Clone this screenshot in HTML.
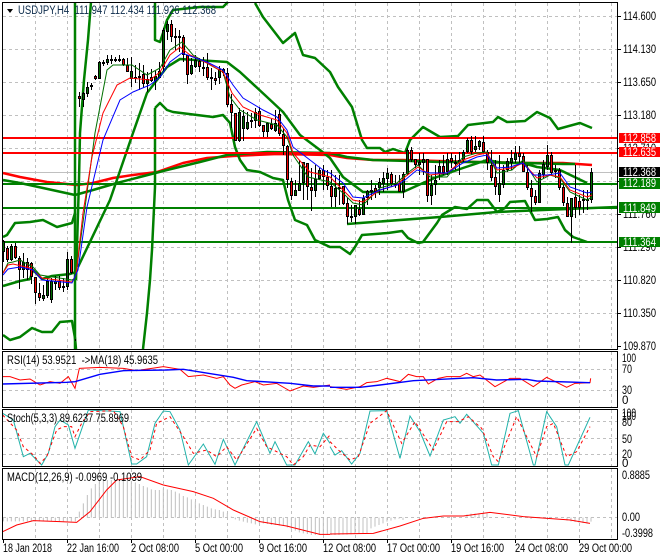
<!DOCTYPE html>
<html><head><meta charset="utf-8"><style>
html,body{margin:0;padding:0;background:#fff}
svg{display:block}
text{font-family:"Liberation Sans",sans-serif;font-size:11.5px;fill:#000}
.g{stroke:#c0c0c0;stroke-width:1;stroke-dasharray:3 3;fill:none}
.b{stroke:#008000;stroke-width:2.5;fill:none;stroke-linejoin:round}
.t{stroke-width:1;fill:none}
.n{vector-effect:non-scaling-stroke;fill:none;stroke-width:1}
</style></head><body>
<svg width="660" height="560" viewBox="0 0 660 560" xmlns="http://www.w3.org/2000/svg">
<rect width="660" height="560" fill="#fff"/>
<path class="g" d="M35.5 3V349M67.5 3V349M99.5 3V349M131.5 3V349M163.5 3V349M195.5 3V349M227.5 3V349M259.5 3V349M291.5 3V349M323.5 3V349M355.5 3V349M387.5 3V349M419.5 3V349M451.5 3V349M483.5 3V349M515.5 3V349M547.5 3V349M579.5 3V349M611.5 3V349
M35.5 352V407M67.5 352V407M99.5 352V407M131.5 352V407M163.5 352V407M195.5 352V407M227.5 352V407M259.5 352V407M291.5 352V407M323.5 352V407M355.5 352V407M387.5 352V407M419.5 352V407M451.5 352V407M483.5 352V407M515.5 352V407M547.5 352V407M579.5 352V407M611.5 352V407
M35.5 410V466M67.5 410V466M99.5 410V466M131.5 410V466M163.5 410V466M195.5 410V466M227.5 410V466M259.5 410V466M291.5 410V466M323.5 410V466M355.5 410V466M387.5 410V466M419.5 410V466M451.5 410V466M483.5 410V466M515.5 410V466M547.5 410V466M579.5 410V466M611.5 410V466
M35.5 469V539M67.5 469V539M99.5 469V539M131.5 469V539M163.5 469V539M195.5 469V539M227.5 469V539M259.5 469V539M291.5 469V539M323.5 469V539M355.5 469V539M387.5 469V539M419.5 469V539M451.5 469V539M483.5 469V539M515.5 469V539M547.5 469V539M579.5 469V539M611.5 469V539
M3 16.5H617M3 49.5H617M3 82.5H617M3 115.5H617M3 148.5H617M3 181.5H617M3 214.5H617M3 247.5H617M3 280.5H617M3 313.5H617
M3 369.5H617M3 390.5H617M3 421.5H617M3 438.5H617M3 454.5H617M3 517.5H617"/>
<path d="M3 172.5H617" stroke="#c0c0c0" fill="none"/>

<!-- MACD histogram -->
<g transform="translate(0,280) scale(.33333)">
<path class="n" stroke="#c0c0c0" d="M10 713V724M22 713V724M34 713V724M46 713V724M58 713V724M70 713V724M82 713V724M94 713V724M106 713V724M118 713V724M130 713V724M142 713V724M154 713V724M166 713V724M178 713V724M190 713V724M202 713V724M214 713V724M226 713V724M238 713V695M250 713V670M262 713V645M274 713V625M286 713V612M298 713V605M310 713V600M322 713V600M334 713V600M346 713V600M358 713V600M370 713V598M382 713V600M394 713V603M406 713V607M418 713V612M430 713V618M442 713V622M454 713V628M466 713V630M478 713V630M490 713V625M502 713V628M514 713V630M526 713V635M538 713V640M550 713V648M562 713V652M574 713V658M586 713V665M598 713V670M610 713V675M622 713V680M634 713V685M646 713V688M658 713V690M670 713V695M682 713V700M694 713V710M706 713V718M718 713V722M730 713V725M742 713V728M754 713V730M766 713V733M778 713V730M790 713V730M802 713V732M814 713V735M826 713V735M838 713V737M850 713V738M862 713V742M874 713V748M886 713V752M898 713V757M910 713V760M922 713V762M934 713V765M946 713V765M958 713V765M970 713V765M982 713V765"/>
</g>
<g transform="translate(330,280) scale(.33333)">
<path class="n" stroke="#c0c0c0" d="M3 713V765M15 713V765M27 713V765M39 713V764M51 713V764M63 713V763M75 713V762M87 713V762M99 713V760M111 713V760M123 713V745M135 713V740M147 713V735M159 713V730M171 713V725M183 713V722M195 713V718M207 713V716M219 713V720M279 713V717M291 713V716M411 713V703M423 713V701M435 713V700M447 713V700M459 713V700M471 713V700M603 713V717M711 713V722M723 713V724M735 713V726M747 713V728M759 713V729M771 713V731M783 713V725"/>
</g>

<!-- long MAs -->
<polyline class="b" style="stroke:#ff0000;stroke-width:2.5" points="3,173 20,177 47,182 77,185 93,183 113,178 133,175 157,172 183,163 207,158 233,156 277,154 330,155 347,158 373,160 403,160 475,162 527,163 563,163 592,165"/>
<polyline class="b" points="3,180 20,183 43,188 75,195 93,190 117,183 140,177 167,170 200,162 227,155 267,152 330,153 347,157 373,160 410,161 440,162 475,162 527,163 563,164 575,164"/>
<!-- trend line -->
<polyline class="b" points="347,224 440,217 497,212 543,210 617,207"/>
<!-- bands -->
<polyline class="b" points="3,237 7,235 15,223 30,222 43,220 57,227 72,223 75,213"/>
<polyline class="b" points="3,335 10,340 20,337 32,328 42,332 52,332 60,322 72,321 75,338 76,349"/>
<polyline class="b" points="3,286 20,281 30,279 33,270 42,279 52,276 70,274 76,272"/>
<polyline class="b" points="75,2 75,349"/>
<polyline class="b" points="76,280 79,180 80,133 84,80 88,40 91,2"/>
<polyline class="b" points="155,2 155,40 160,42 163,33 167,20 173,10 200,7 223,7 228,2"/>
<polyline class="b" points="155,108 155,187 152,250 150,280 147,313 143,349"/>
<polyline class="b" points="155,108 160,103 167,110 173,112 213,117 223,115 230,123 235,147 240,160 247,170 260,172 273,178 283,180 288,200 295,220 307,225 315,240 330,247 340,247 350,254 355,247 362,235 388,233 402,231 408,238 418,243 423,242 437,223 442,215 455,207 467,209 477,200 488,200 497,212 505,208 510,202 525,201 535,220 547,219 558,217 565,230 573,237 587,242"/>
<polyline class="b" points="255,3 263,17 283,43 295,33 303,55 315,58 330,72 338,87 352,107 362,140 367,148 380,148 385,152 393,149 405,153 410,140 423,127 440,137 458,136 468,125 493,122 498,117 507,122 525,121 537,112 550,118 558,129 580,123 592,128"/>
<polyline class="b" points="78,267 110,200 133,133 147,93 157,80 167,67 180,59 227,62 240,72 267,97 283,112 300,135 320,150 330,158 343,177 363,192 380,192 403,192 423,183 437,177 463,168 487,160 503,163 523,163 537,167 560,170 587,183"/>

<!-- horizontals -->
<path d="M3 138H617M3 153H617" stroke="#ff0000" stroke-width="2" fill="none"/>
<path d="M3 184H617M3 208H617M3 242H617" stroke="#008000" stroke-width="2" fill="none"/>

<!-- candles -->
<path stroke="#000" fill="none" d="M3.5 240V262M7.5 246V262M11.5 244V261M15.5 243V259M19.5 256V289M23.5 253V278M27.5 258V280M31.5 262V284M35.5 277V304M39.5 283V301M43.5 285V301M47.5 278V298M51.5 278V303M55.5 276V290M59.5 276V290M63.5 278V292M67.5 252V290M71.5 256V274M75.5 339V341M79.5 92V107M83.5 92V107M87.5 82V97M91.5 83V90M95.5 75V80M99.5 61V79M103.5 60V66M107.5 55V65M111.5 55V64M115.5 57V62M119.5 55V62M123.5 58V66M127.5 58V72M131.5 57V87M135.5 65V83M139.5 63V90M143.5 65V88M147.5 72V92M151.5 69V82M155.5 71V90M159.5 62V78M163.5 28V72M167.5 21V40M171.5 20V42M175.5 28V50M179.5 30V52M183.5 35V62M187.5 55V84M191.5 58V75M195.5 55V68M199.5 58V72M203.5 57V76M207.5 53V80M211.5 68V90M215.5 72V85M219.5 66V84M223.5 68V76M227.5 68V107M231.5 94V128M235.5 113V141M239.5 108V142M243.5 110V141M247.5 112V130M251.5 113V128M255.5 108V128M259.5 107V127M263.5 125V137M267.5 122V137M271.5 119V130M275.5 110V132M279.5 110V136M283.5 128V155M287.5 145V188M291.5 178V200M295.5 180V196M299.5 160V191M303.5 162V200M307.5 163V200M311.5 168V211M315.5 165V197M319.5 168V180M323.5 165V190M327.5 170V190M331.5 170V207M335.5 175V207M339.5 175V205M343.5 186V205M347.5 198V224M351.5 205V222M355.5 205V224M359.5 200V216M363.5 195V215M367.5 190V205M371.5 180V200M375.5 185V198M379.5 178V195M383.5 172V192M387.5 168V190M391.5 172V186M395.5 175V188M399.5 175V192M403.5 172V198M407.5 148V175M411.5 147V162M415.5 159V168M419.5 153V175M423.5 153V175M427.5 159V202M431.5 175V205M435.5 165V195M439.5 160V180M443.5 155V175M447.5 153V175M451.5 153V168M455.5 155V170M459.5 152V175M463.5 150V162M467.5 138V153M471.5 136V155M475.5 136V152M479.5 140V150M483.5 136V153M487.5 150V170M491.5 150V181M495.5 160V195M499.5 155V202M503.5 165V188M507.5 158V172M511.5 150V170M515.5 146V163M519.5 146V165M523.5 153V172M527.5 165V190M531.5 180V212M535.5 190V205M539.5 170V203M543.5 160V178M547.5 145V170M551.5 152V175M555.5 165V178M559.5 168V190M563.5 185V206M567.5 197V217M571.5 198V243M575.5 165V218M579.5 195V215M583.5 190V213M587.5 190V210M591.5 168V203"/>
<path stroke="#000" fill="#f00000" d="M6.5 248.5h2V259.5h-2zM14.5 246.5h2V257.5h-2zM18.5 258.5h2V269.5h-2zM26.5 262.5h2V269.5h-2zM30.5 263.5h2V276.5h-2zM34.5 277.5h2V292.5h-2zM38.5 293.5h2V297.5h-2zM58.5 281.5h2V287.5h-2zM70.5 259.5h2V272.5h-2zM78.5 96.5h2V98.5h-2zM94.5 76.5h2V78.5h-2zM102.5 62.5h2V63.5h-2zM122.5 59.5h2V64.5h-2zM126.5 65.5h2V71.5h-2zM134.5 77.5h2V78.5h-2zM142.5 74.5h2V83.5h-2zM150.5 77.5h2V80.5h-2zM170.5 24.5h2V36.5h-2zM182.5 37.5h2V54.5h-2zM186.5 55.5h2V74.5h-2zM198.5 61.5h2V66.5h-2zM206.5 67.5h2V77.5h-2zM214.5 78.5h2V80.5h-2zM226.5 73.5h2V104.5h-2zM230.5 104.5h2V112.5h-2zM234.5 113.5h2V140.5h-2zM258.5 111.5h2V125.5h-2zM262.5 125.5h2V131.5h-2zM270.5 124.5h2V128.5h-2zM278.5 114.5h2V133.5h-2zM282.5 134.5h2V145.5h-2zM286.5 146.5h2V179.5h-2zM290.5 181.5h2V195.5h-2zM306.5 163.5h2V186.5h-2zM310.5 187.5h2V190.5h-2zM322.5 170.5h2V176.5h-2zM326.5 177.5h2V185.5h-2zM330.5 186.5h2V196.5h-2zM338.5 187.5h2V188.5h-2zM342.5 186.5h2V203.5h-2zM346.5 203.5h2V216.5h-2zM358.5 209.5h2V214.5h-2zM374.5 188.5h2V191.5h-2zM390.5 174.5h2V183.5h-2zM398.5 183.5h2V191.5h-2zM410.5 150.5h2V159.5h-2zM414.5 159.5h2V164.5h-2zM426.5 159.5h2V195.5h-2zM442.5 166.5h2V172.5h-2zM450.5 158.5h2V161.5h-2zM470.5 140.5h2V151.5h-2zM482.5 142.5h2V151.5h-2zM486.5 152.5h2V162.5h-2zM490.5 165.5h2V177.5h-2zM494.5 177.5h2V186.5h-2zM518.5 153.5h2V156.5h-2zM522.5 156.5h2V171.5h-2zM526.5 172.5h2V187.5h-2zM530.5 188.5h2V196.5h-2zM534.5 196.5h2V202.5h-2zM550.5 155.5h2V172.5h-2zM558.5 170.5h2V187.5h-2zM562.5 187.5h2V202.5h-2zM566.5 203.5h2V216.5h-2zM574.5 197.5h2V207.5h-2zM578.5 201.5h2V207.5h-2z"/>
<path stroke="#000" fill="#006a00" d="M2.5 241.5h2V251.5h-2zM10.5 246.5h2V259.5h-2zM22.5 262.5h2V269.5h-2zM42.5 295.5h2V298.5h-2zM46.5 281.5h2V295.5h-2zM50.5 281.5h2V299.5h-2zM54.5 281.5h2V283.5h-2zM62.5 286.5h2V287.5h-2zM66.5 259.5h2V286.5h-2zM82.5 93.5h2V99.5h-2zM86.5 87.5h2V93.5h-2zM90.5 85.5h2V86.5h-2zM98.5 62.5h2V78.5h-2zM106.5 59.5h2V62.5h-2zM110.5 59.5h2V60.5h-2zM114.5 59.5h2V60.5h-2zM118.5 59.5h2V60.5h-2zM130.5 71.5h2V78.5h-2zM138.5 76.5h2V77.5h-2zM146.5 79.5h2V83.5h-2zM154.5 76.5h2V80.5h-2zM158.5 71.5h2V77.5h-2zM162.5 30.5h2V66.5h-2zM166.5 24.5h2V31.5h-2zM174.5 36.5h2V37.5h-2zM178.5 36.5h2V37.5h-2zM190.5 65.5h2V73.5h-2zM194.5 60.5h2V66.5h-2zM202.5 67.5h2V68.5h-2zM210.5 77.5h2V78.5h-2zM218.5 69.5h2V77.5h-2zM222.5 69.5h2V72.5h-2zM238.5 112.5h2V140.5h-2zM242.5 116.5h2V128.5h-2zM246.5 122.5h2V128.5h-2zM250.5 120.5h2V121.5h-2zM254.5 112.5h2V120.5h-2zM266.5 123.5h2V131.5h-2zM274.5 123.5h2V130.5h-2zM294.5 190.5h2V195.5h-2zM298.5 183.5h2V190.5h-2zM302.5 162.5h2V182.5h-2zM314.5 179.5h2V190.5h-2zM318.5 170.5h2V178.5h-2zM334.5 188.5h2V196.5h-2zM350.5 216.5h2V217.5h-2zM354.5 205.5h2V216.5h-2zM362.5 198.5h2V214.5h-2zM366.5 191.5h2V197.5h-2zM370.5 190.5h2V191.5h-2zM378.5 182.5h2V187.5h-2zM382.5 178.5h2V183.5h-2zM386.5 173.5h2V178.5h-2zM394.5 183.5h2V184.5h-2zM402.5 174.5h2V191.5h-2zM406.5 150.5h2V173.5h-2zM418.5 162.5h2V164.5h-2zM422.5 159.5h2V162.5h-2zM430.5 185.5h2V195.5h-2zM434.5 180.5h2V184.5h-2zM438.5 166.5h2V172.5h-2zM446.5 159.5h2V171.5h-2zM454.5 162.5h2V163.5h-2zM458.5 160.5h2V162.5h-2zM462.5 152.5h2V159.5h-2zM466.5 140.5h2V151.5h-2zM474.5 146.5h2V149.5h-2zM478.5 141.5h2V146.5h-2zM498.5 183.5h2V194.5h-2zM502.5 170.5h2V184.5h-2zM506.5 161.5h2V169.5h-2zM510.5 158.5h2V162.5h-2zM514.5 153.5h2V159.5h-2zM538.5 173.5h2V202.5h-2zM542.5 164.5h2V174.5h-2zM546.5 155.5h2V166.5h-2zM554.5 170.5h2V171.5h-2zM570.5 198.5h2V216.5h-2zM582.5 199.5h2V200.5h-2zM586.5 199.5h2V200.5h-2zM590.5 172.5h2V199.5h-2z"/>

<!-- thin MAs -->
<polyline class="t" stroke="#007000" points="3,273 8,263 13,262 20,260 33,267 40,275 72,280 75,278 77,267 95,133 107,70 113,65 132,65 147,75 160,68 170,50 182,42 193,55 210,65 223,72 230,97 240,110 257,120 277,125 287,137 293,155 308,177 330,182 343,193 353,203 363,205 380,188 397,183 405,175 418,165 430,177 447,177 463,157 477,153 487,152 497,173 512,170 523,160 537,182 550,175 560,178 570,192 587,200 592,197"/>
<polyline class="t" stroke="#ff0000" points="3,273 8,265 13,264 30,268 42,278 72,282 76,275 83,213 92,157 103,113 117,85 130,78 150,80 160,72 170,55 180,47 190,55 207,63 223,72 232,93 243,107 260,115 277,120 287,133 293,153 310,172 330,177 343,190 353,200 363,202 380,190 397,185 405,177 418,167 430,175 447,173 463,160 477,155 487,153 497,170 512,168 523,163 537,178 550,175 560,177 570,190 587,197 592,195"/>
<polyline class="t" stroke="#0000ff" points="3,275 8,269 20,267 33,270 42,280 72,283 78,270 87,207 103,140 120,100 133,92 150,85 160,77 170,62 182,53 193,57 207,62 223,70 233,85 243,98 263,110 277,117 287,130 293,147 310,160 323,170 330,173 343,183 353,197 363,198 380,190 397,185 405,180 417,170 430,173 447,173 463,163 477,157 487,155 497,168 510,167 523,163 533,175 547,175 560,173 570,187 587,193 592,192"/>

<!-- RSI / Stoch / MACD lines -->
<g transform="translate(0,280) scale(.33333)">
<polyline class="n" stroke="#ff0000" points="8,290 30,290 60,300 90,297 120,315 150,305 180,310 205,290 225,325 238,265 300,262 370,265 410,272 490,260 540,268 565,290 610,285 650,295 670,290 690,315 705,325 725,315 765,305 790,315 830,310 870,333 910,318 940,322 990,315"/>
<polyline class="n" stroke="#0000ff" style="stroke-width:1.4" points="8,312 200,307 225,305 300,283 370,272 500,270 550,268 700,292 740,302 870,310 940,318 990,318"/>
<polyline class="n" stroke="#20b2aa" points="8,400 40,420 70,530 90,520 125,555 145,520 165,440 180,420 205,435 225,505 265,390 300,392 360,395 395,552 410,552 440,530 465,430 490,393 510,395 540,450 565,555 610,492 645,553 670,478 705,555 770,425 810,520 825,485 860,555 885,555 925,485 945,522 970,460 990,490"/>
<polyline class="n" stroke="#ff0000" stroke-dasharray="3 3" points="8,405 50,450 70,500 100,525 120,550 140,530 170,450 190,440 215,440 225,470 245,430 270,395 340,392 370,440 395,530 420,540 450,510 470,430 510,410 550,470 580,520 620,510 650,530 680,500 710,540 770,445 800,500 860,530 880,555 910,530 930,495 960,500 990,465"/>
<polyline class="n" stroke="#ff0000" points="8,755 50,735 100,722 180,725 230,727 270,695 320,630 350,600 420,590 490,615 580,635 640,655 700,690 780,725 860,738 960,763 990,763"/>
</g>
<g transform="translate(330,280) scale(.33333)">
<polyline class="n" stroke="#ff0000" points="0,320 50,328 90,320 110,308 140,305 170,295 210,305 235,283 260,290 280,290 295,312 325,295 350,290 390,290 410,280 430,290 450,285 495,320 540,295 570,295 610,320 650,292 710,322 735,310 780,308 782,295"/>
<polyline class="n" stroke="#0000ff" style="stroke-width:1.4" points="0,322 90,322 150,315 250,302 430,293 500,300 590,298 620,303 780,308"/>
<polyline class="n" stroke="#20b2aa" points="0,500 15,525 35,512 65,552 90,520 120,393 170,392 210,535 240,408 270,455 300,528 340,420 375,410 390,430 410,403 460,460 485,555 505,555 540,400 565,392 610,555 615,555 650,395 680,440 705,555 715,555 780,412"/>
<polyline class="n" stroke="#ff0000" stroke-dasharray="3 3" points="0,485 25,510 60,540 85,530 120,430 170,392 215,490 255,425 310,510 350,425 385,425 415,410 455,445 490,530 505,545 560,410 620,530 650,440 670,430 710,530 740,515 780,440"/>
<polyline class="n" stroke="#ff0000" points="0,762 130,760 210,738 280,715 340,708 400,708 480,697 580,710 720,720 780,730"/>
</g>

<!-- frames -->
<path stroke="#000" fill="none" d="M2.5 2.5H617.5V349.5H2.5ZM2.5 351.5H617.5V407.5H2.5ZM2.5 409.5H617.5V466.5H2.5ZM2.5 468.5H617.5V539.5H2.5Z"/>
<path stroke="#000" fill="none" d="M618 16.5h3M618 49.5h3M618 82.5h3M618 115.5h3M618 148.5h3M618 181.5h3M618 214.5h3M618 247.5h3M618 280.5h3M618 313.5h3M618 346.5h3M3.5 540v3M67.5 540v3M131.5 540v3M195.5 540v3M259.5 540v3M323.5 540v3M387.5 540v3M451.5 540v3M515.5 540v3M579.5 540v3"/>

<!-- axis labels -->
<g>
<text x="623" y="20" textLength="33" lengthAdjust="spacingAndGlyphs">114.600</text>
<text x="623" y="53" textLength="33" lengthAdjust="spacingAndGlyphs">114.130</text>
<text x="623" y="86" textLength="33" lengthAdjust="spacingAndGlyphs">113.650</text>
<text x="623" y="119" textLength="33" lengthAdjust="spacingAndGlyphs">113.180</text>
<text x="623" y="152" textLength="33" lengthAdjust="spacingAndGlyphs">112.710</text>
<text x="623" y="218" textLength="33" lengthAdjust="spacingAndGlyphs">111.760</text>
<text x="623" y="251" textLength="33" lengthAdjust="spacingAndGlyphs">111.290</text>
<text x="623" y="284" textLength="33" lengthAdjust="spacingAndGlyphs">110.820</text>
<text x="623" y="317" textLength="33" lengthAdjust="spacingAndGlyphs">110.350</text>
<text x="623" y="350" textLength="33" lengthAdjust="spacingAndGlyphs">109.870</text>

<rect x="619" y="133" width="41" height="10" fill="#ff0000"/>
<rect x="619" y="147" width="41" height="10" fill="#ff0000"/>
<rect x="619" y="167" width="41" height="10" fill="#000"/>
<rect x="619" y="178" width="41" height="11" fill="#008000"/>
<rect x="619" y="202" width="41" height="11" fill="#008000"/>
<rect x="619" y="237" width="41" height="10" fill="#008000"/>
<text x="623" y="142" textLength="33" lengthAdjust="spacingAndGlyphs" style="fill:#fff">112.858</text>
<text x="623" y="156" textLength="33" lengthAdjust="spacingAndGlyphs" style="fill:#fff">112.635</text>
<text x="623" y="176" textLength="33" lengthAdjust="spacingAndGlyphs" style="fill:#fff">112.368</text>
<text x="623" y="187" textLength="33" lengthAdjust="spacingAndGlyphs" style="fill:#fff">112.189</text>
<text x="623" y="212" textLength="33" lengthAdjust="spacingAndGlyphs" style="fill:#fff">111.849</text>
<text x="623" y="246" textLength="33" lengthAdjust="spacingAndGlyphs" style="fill:#fff">111.364</text>

<text x="622" y="362" textLength="14" lengthAdjust="spacingAndGlyphs">100</text>
<text x="622" y="373" textLength="10" lengthAdjust="spacingAndGlyphs">70</text>
<text x="622" y="394" textLength="10" lengthAdjust="spacingAndGlyphs">30</text>
<text x="622" y="404">0</text>
<text x="622" y="417" textLength="14" lengthAdjust="spacingAndGlyphs">100</text>
<text x="622" y="420" textLength="14" lengthAdjust="spacingAndGlyphs">100</text>
<text x="622" y="426" textLength="10" lengthAdjust="spacingAndGlyphs">80</text>
<text x="622" y="443" textLength="10" lengthAdjust="spacingAndGlyphs">50</text>
<text x="622" y="458" textLength="10" lengthAdjust="spacingAndGlyphs">20</text>
<text x="622" y="467">0</text>
<text x="622" y="479" textLength="28" lengthAdjust="spacingAndGlyphs">0.8885</text>
<text x="622" y="521" textLength="18" lengthAdjust="spacingAndGlyphs">0.00</text>
<text x="622" y="537" textLength="31" lengthAdjust="spacingAndGlyphs">-0.3998</text>

<text x="3" y="552" textLength="49" lengthAdjust="spacingAndGlyphs">18 Jan 2018</text>
<text x="67" y="552" textLength="52" lengthAdjust="spacingAndGlyphs">22 Jan 16:00</text>
<text x="131" y="552" textLength="48" lengthAdjust="spacingAndGlyphs">2 Oct 08:00</text>
<text x="195" y="552" textLength="48" lengthAdjust="spacingAndGlyphs">5 Oct 00:00</text>
<text x="259" y="552" textLength="48" lengthAdjust="spacingAndGlyphs">9 Oct 16:00</text>
<text x="323" y="552" textLength="53" lengthAdjust="spacingAndGlyphs">12 Oct 08:00</text>
<text x="387" y="552" textLength="53" lengthAdjust="spacingAndGlyphs">17 Oct 00:00</text>
<text x="451" y="552" textLength="53" lengthAdjust="spacingAndGlyphs">19 Oct 16:00</text>
<text x="515" y="552" textLength="53" lengthAdjust="spacingAndGlyphs">24 Oct 08:00</text>
<text x="579" y="552" textLength="53" lengthAdjust="spacingAndGlyphs">29 Oct 00:00</text>

<path d="M7 9H13L10 13Z" fill="#000"/>
<text x="18" y="14" textLength="198" lengthAdjust="spacingAndGlyphs" xml:space="preserve" style="fill:#0b2a4a">USDJPY,H4  111.947 112.434 111.926 112.368</text>
<text x="7" y="364" textLength="151" lengthAdjust="spacingAndGlyphs" xml:space="preserve">RSI(14) 53.9521  -&gt;MA(18) 45.9635</text>
<text x="7" y="422" textLength="122" lengthAdjust="spacingAndGlyphs">Stoch(5,3,3) 89.6237 75.8969</text>
<text x="7" y="481" textLength="135" lengthAdjust="spacingAndGlyphs">MACD(12,26,9) -0.0969 -0.1039</text>
</g>
</svg>
</body></html>
